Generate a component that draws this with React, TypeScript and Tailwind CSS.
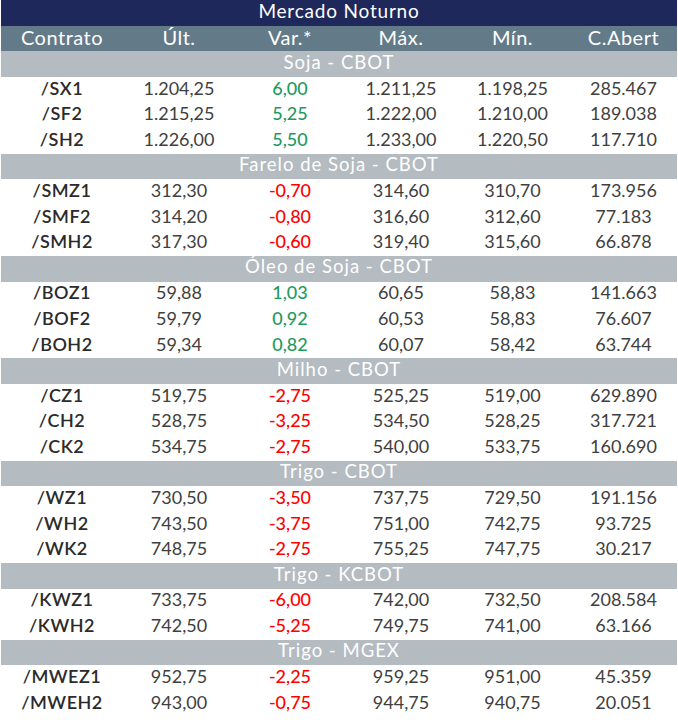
type Row = [string, string, string, string, string, string];

const sections: { title: string; rows: Row[] }[] = [
  {
    title: "Soja - CBOT",
    rows: [
      ["/SX1", "1.204,25", "6,00", "1.211,25", "1.198,25", "285.467"],
      ["/SF2", "1.215,25", "5,25", "1.222,00", "1.210,00", "189.038"],
      ["/SH2", "1.226,00", "5,50", "1.233,00", "1.220,50", "117.710"],
    ],
  },
  {
    title: "Farelo de Soja - CBOT",
    rows: [
      ["/SMZ1", "312,30", "-0,70", "314,60", "310,70", "173.956"],
      ["/SMF2", "314,20", "-0,80", "316,60", "312,60", "77.183"],
      ["/SMH2", "317,30", "-0,60", "319,40", "315,60", "66.878"],
    ],
  },
  {
    title: "Óleo de Soja - CBOT",
    rows: [
      ["/BOZ1", "59,88", "1,03", "60,65", "58,83", "141.663"],
      ["/BOF2", "59,79", "0,92", "60,53", "58,83", "76.607"],
      ["/BOH2", "59,34", "0,82", "60,07", "58,42", "63.744"],
    ],
  },
  {
    title: "Milho - CBOT",
    rows: [
      ["/CZ1", "519,75", "-2,75", "525,25", "519,00", "629.890"],
      ["/CH2", "528,75", "-3,25", "534,50", "528,25", "317.721"],
      ["/CK2", "534,75", "-2,75", "540,00", "533,75", "160.690"],
    ],
  },
  {
    title: "Trigo - CBOT",
    rows: [
      ["/WZ1", "730,50", "-3,50", "737,75", "729,50", "191.156"],
      ["/WH2", "743,50", "-3,75", "751,00", "742,75", "93.725"],
      ["/WK2", "748,75", "-2,75", "755,25", "747,75", "30.217"],
    ],
  },
  {
    title: "Trigo - KCBOT",
    rows: [
      ["/KWZ1", "733,75", "-6,00", "742,00", "732,50", "208.584"],
      ["/KWH2", "742,50", "-5,25", "749,75", "741,00", "63.166"],
    ],
  },
  {
    title: "Trigo - MGEX",
    rows: [
      ["/MWEZ1", "952,75", "-2,25", "959,25", "951,00", "45.359"],
      ["/MWEH2", "943,00", "-0,75", "944,75", "940,75", "20.051"],
    ],
  },
];

const cols = "grid grid-cols-[122px_112px_110px_112px_111px_111px]";
const headers = ["Contrato", "Últ.", "Var.*", "Máx.", "Mín.", "C.Abert"];

export default function App() {
  return (
    <div className="w-[678px] h-[720px] bg-white pl-px pr-px text-[18px] leading-none font-['Lato',sans-serif]">
      <div className="h-[25.6px] pb-1 bg-[#1f285a] text-white text-[19px] tracking-[0.8px] flex items-center justify-center">
        Mercado Noturno
      </div>
      <div className={`${cols} h-[25.6px] pb-0.5 bg-[#637a89] text-white text-[20px] tracking-[0.5px] items-center text-center`}>
        {headers.map((h) => (
          <div key={h}>{h}</div>
        ))}
      </div>
      {sections.map((s) => (
        <div key={s.title}>
          <div className="h-[25.6px] pb-1 bg-[#b4bbc1] text-white text-[18.5px] tracking-[1px] flex items-center justify-center">
            {s.title}
          </div>
          {s.rows.map((r) => {
            const neg = r[2].startsWith("-");
            return (
              <div key={r[0]} className={`${cols} h-[25.6px] pb-1 items-center text-center`}>
                <div className="font-semibold tracking-[0.5px] text-[#2b2b2b]">{r[0]}</div>
                <div className="text-[#404040]">{r[1]}</div>
                <div className={`font-medium ${neg ? "text-[#ff0000]" : "text-[#1f9a5e]"}`}>{r[2]}</div>
                <div className="text-[#404040]">{r[3]}</div>
                <div className="text-[#404040]">{r[4]}</div>
                <div className="text-[#404040]">{r[5]}</div>
              </div>
            );
          })}
        </div>
      ))}
    </div>
  );
}
